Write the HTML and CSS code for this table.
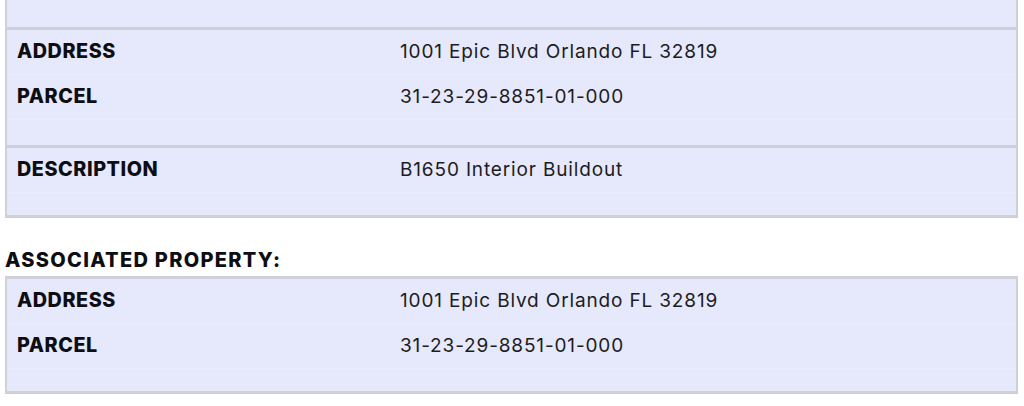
FILE: index.html
```html
<!DOCTYPE html>
<html lang="en">
<head>
<meta charset="utf-8">
<title>Permit details</title>
<link rel="stylesheet" href="styles.css">
</head>
<body>
<div class="page">
  <div class="box box-cut">
    <div class="section section-top"></div>
    <div class="section">
      <div class="row"><div class="label">ADDRESS</div><div class="value">1001 Epic Blvd Orlando FL 32819</div></div>
      <div class="row"><div class="label">PARCEL</div><div class="value">31-23-29-8851-01-000</div></div>
    </div>
    <div class="section section-short">
      <div class="row"><div class="label">DESCRIPTION</div><div class="value">B1650 Interior Buildout</div></div>
    </div>
  </div>
  <h2 class="heading">ASSOCIATED PROPERTY:</h2>
  <div class="box">
    <div class="section section-short">
      <div class="row"><div class="label">ADDRESS</div><div class="value">1001 Epic Blvd Orlando FL 32819</div></div>
      <div class="row"><div class="label">PARCEL</div><div class="value">31-23-29-8851-01-000</div></div>
    </div>
  </div>
</div>
</body>
</html>
```
FILE: styles.css
```css
* { box-sizing: border-box; }
html, body { margin: 0; padding: 0; background: #ffffff; }
body { font-family: Inter, "Open Sans", sans-serif; color: #141414; }
.page { padding: 0 6px 0 5px; }
.box {
  background: #e6e8fb;
  border: 3px solid #d0d1d8;
  border-left-width: 2px;
  border-right-width: 2px;
}
.box-cut { border-top: none; }
.section { padding-bottom: 25px; }
.section-short { padding-bottom: 22px; }
.section + .section { border-top: 3px solid #cdced6; }
.section-top { height: 27px; padding: 0; }
.row {
  display: flex;
  align-items: center;
  height: 45px;
  padding-bottom: 2px;
  border-bottom: 1px solid #eaecfb;
}
.label {
  flex: 0 0 393px;
  padding-left: 10px;
  font-weight: 800;
  font-size: 19.8px;
  letter-spacing: 0.55px;
  color: #0e0e12;
}
.value {
  font-size: 19px;
  letter-spacing: 0.85px;
  color: #1c1c22;
}
.heading {
  margin: 30px 0 4px;
  font-size: 20px;
  line-height: 24px;
  font-weight: 800;
  letter-spacing: 1.3px;
  color: #0e0e12;
}
```
